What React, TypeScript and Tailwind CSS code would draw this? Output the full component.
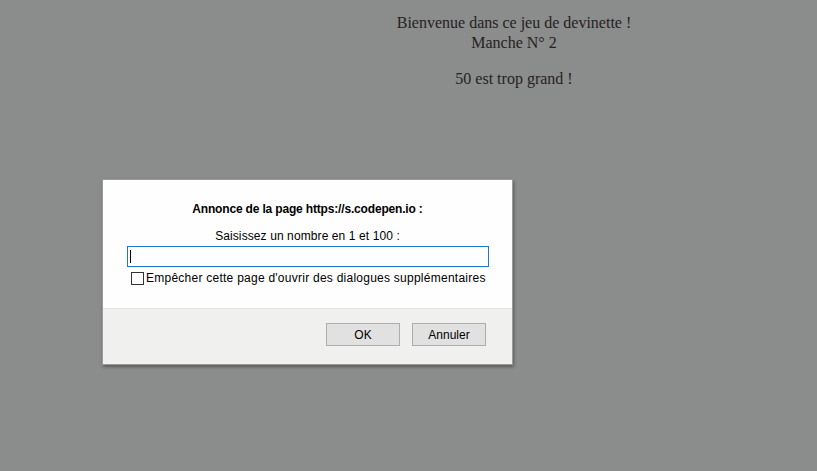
export default function App() {
  return (
    <div className="w-[817px] h-[471px] bg-[#8b8c8c] relative overflow-hidden" style={{ fontFamily: '"Liberation Serif", serif' }}>
      <div className="ml-[211px] w-[606px] pt-[13px] text-center text-[16px] leading-[20px] text-[#262222]">
        <div>Bienvenue dans ce jeu de devinette !</div>
        <div>Manche N° 2</div>
        <div className="mt-[16px]">50 est trop grand !</div>
      </div>
      <div
        className="absolute left-[102px] top-[179px] w-[411px] h-[186px] bg-[#fefefe] border border-[#9a9a9a] shadow-[1px_2px_3px_rgba(0,0,0,0.35)] flex flex-col text-black"
        style={{ fontFamily: '"Liberation Sans", Arial, sans-serif' }}
      >
        <div className="flex-1 flex flex-col pt-[22px]">
          <div className="text-[12px] font-bold leading-[14px] text-center tracking-[-0.17px]">Annonce de la page https://s.codepen.io :</div>
          <div className="text-[12px] leading-[14px] mt-[13px] text-center tracking-[0.1px]">Saisissez un nombre en 1 et 100 :</div>
          <div className="mt-[3px] ml-[24px] w-[362px] h-[21px] border border-[#1a7ad6] bg-white flex items-center pl-[2px]">
            <div className="w-[1px] h-[13px] bg-black" />
          </div>
          <div className="mt-[4px] flex items-center ml-[28px]">
            <div className="w-[13px] h-[13px] border border-[#333] bg-white" />
            <span className="text-[12px] leading-[14px] ml-[2px] tracking-[0.25px]">Empêcher cette page d'ouvrir des dialogues supplémentaires</span>
          </div>
        </div>
        <div className="h-[56px] bg-[#f0f0ee] border-t border-[#e4e4e2] flex justify-end items-start pt-[14px] pr-[26px] gap-[12px]">
          <button className="w-[74px] h-[23px] bg-[#e1e1e1] border border-[#adadad] text-[12px]">OK</button>
          <button className="w-[74px] h-[23px] bg-[#e1e1e1] border border-[#adadad] text-[12px]">Annuler</button>
        </div>
      </div>
    </div>
  );
}
